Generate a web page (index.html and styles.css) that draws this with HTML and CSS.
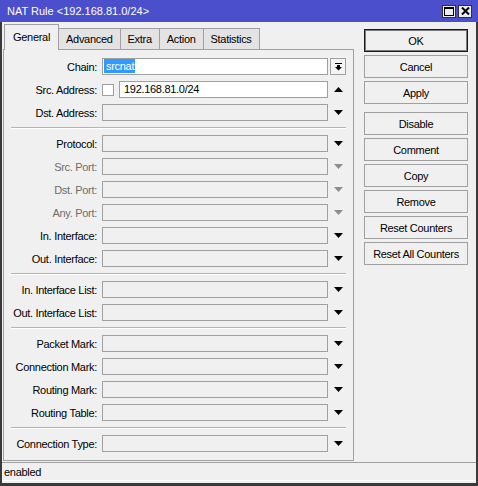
FILE: index.html
```html
<!DOCTYPE html>
<html lang="en">
<head>
    <meta charset="UTF-8">
    <title>NAT Rule &lt;192.168.81.0/24&gt;</title>
    <link rel="stylesheet" href="styles.css">
</head>
<body>

<div class="window">
  <div class="titlebar">
    <span class="title">NAT Rule &lt;192.168.81.0/24&gt;</span>
    <span class="wbtn">
      <svg width="10" height="9" viewBox="0 0 10 9"><rect x="0.5" y="0.5" width="9" height="8" fill="none" stroke="#000"/><rect x="0" y="0" width="10" height="2" fill="#000"/></svg>
    </span>
    <span class="wbtn">
      <svg width="9" height="8" viewBox="0 0 9 8"><path d="M1 0.5 L8 7.5 M8 0.5 L1 7.5" stroke="#000" stroke-width="2"/></svg>
    </span>
  </div>

  <div class="frame">
    <div class="main">
      <div class="left">
        <div class="tabs">
          <div class="tab active">General</div>
          <div class="tab">Advanced</div>
          <div class="tab">Extra</div>
          <div class="tab">Action</div>
          <div class="tab">Statistics</div>
        </div>

        <div class="panel">
          <div class="row">
            <div class="lbl">Chain:</div>
            <div class="field on"><span class="sel">srcnat</span></div>
            <div class="arrow box">
              <svg width="7" height="8" viewBox="0 0 7 8"><rect x="0" y="0" width="7" height="1" fill="#000"/><rect x="2" y="2" width="3" height="2" fill="#000"/><polygon points="0,4 7,4 3.5,7.5" fill="#000"/></svg>
            </div>
          </div>
          <div class="row">
            <div class="lbl">Src. Address:</div>
            <div class="pair">
              <span class="check"></span>
              <div class="field on grow">192.168.81.0/24</div>
            </div>
            <div class="arrow"><svg width="9" height="5" viewBox="0 0 9 5"><polygon points="0,5 9,5 4.5,0" fill="#000"/></svg></div>
          </div>
          <div class="row">
            <div class="lbl">Dst. Address:</div>
            <div class="field"></div>
            <div class="arrow"><svg width="9" height="5" viewBox="0 0 9 5"><polygon points="0,0 9,0 4.5,5" fill="#000"/></svg></div>
          </div>

          <div class="sep"></div>

          <div class="row">
            <div class="lbl">Protocol:</div>
            <div class="field"></div>
            <div class="arrow"><svg width="9" height="5" viewBox="0 0 9 5"><polygon points="0,0 9,0 4.5,5" fill="#000"/></svg></div>
          </div>
          <div class="row off">
            <div class="lbl">Src. Port:</div>
            <div class="field"></div>
            <div class="arrow"><svg width="9" height="5" viewBox="0 0 9 5"><polygon points="0,0 9,0 4.5,5" fill="#8b9088"/></svg></div>
          </div>
          <div class="row off">
            <div class="lbl">Dst. Port:</div>
            <div class="field"></div>
            <div class="arrow"><svg width="9" height="5" viewBox="0 0 9 5"><polygon points="0,0 9,0 4.5,5" fill="#8b9088"/></svg></div>
          </div>
          <div class="row off">
            <div class="lbl">Any. Port:</div>
            <div class="field"></div>
            <div class="arrow"><svg width="9" height="5" viewBox="0 0 9 5"><polygon points="0,0 9,0 4.5,5" fill="#8b9088"/></svg></div>
          </div>
          <div class="row">
            <div class="lbl">In. Interface:</div>
            <div class="field"></div>
            <div class="arrow"><svg width="9" height="5" viewBox="0 0 9 5"><polygon points="0,0 9,0 4.5,5" fill="#000"/></svg></div>
          </div>
          <div class="row">
            <div class="lbl">Out. Interface:</div>
            <div class="field"></div>
            <div class="arrow"><svg width="9" height="5" viewBox="0 0 9 5"><polygon points="0,0 9,0 4.5,5" fill="#000"/></svg></div>
          </div>

          <div class="sep"></div>

          <div class="row">
            <div class="lbl">In. Interface List:</div>
            <div class="field"></div>
            <div class="arrow"><svg width="9" height="5" viewBox="0 0 9 5"><polygon points="0,0 9,0 4.5,5" fill="#000"/></svg></div>
          </div>
          <div class="row">
            <div class="lbl">Out. Interface List:</div>
            <div class="field"></div>
            <div class="arrow"><svg width="9" height="5" viewBox="0 0 9 5"><polygon points="0,0 9,0 4.5,5" fill="#000"/></svg></div>
          </div>

          <div class="sep"></div>

          <div class="row">
            <div class="lbl">Packet Mark:</div>
            <div class="field"></div>
            <div class="arrow"><svg width="9" height="5" viewBox="0 0 9 5"><polygon points="0,0 9,0 4.5,5" fill="#000"/></svg></div>
          </div>
          <div class="row">
            <div class="lbl">Connection Mark:</div>
            <div class="field"></div>
            <div class="arrow"><svg width="9" height="5" viewBox="0 0 9 5"><polygon points="0,0 9,0 4.5,5" fill="#000"/></svg></div>
          </div>
          <div class="row">
            <div class="lbl">Routing Mark:</div>
            <div class="field"></div>
            <div class="arrow"><svg width="9" height="5" viewBox="0 0 9 5"><polygon points="0,0 9,0 4.5,5" fill="#000"/></svg></div>
          </div>
          <div class="row">
            <div class="lbl">Routing Table:</div>
            <div class="field"></div>
            <div class="arrow"><svg width="9" height="5" viewBox="0 0 9 5"><polygon points="0,0 9,0 4.5,5" fill="#000"/></svg></div>
          </div>

          <div class="sep"></div>

          <div class="row">
            <div class="lbl">Connection Type:</div>
            <div class="field"></div>
            <div class="arrow"><svg width="9" height="5" viewBox="0 0 9 5"><polygon points="0,0 9,0 4.5,5" fill="#000"/></svg></div>
          </div>
        </div>
      </div>

      <div class="buttons">
        <div class="btn default">OK</div>
        <div class="btn">Cancel</div>
        <div class="btn">Apply</div>
        <div class="btn spaced">Disable</div>
        <div class="btn">Comment</div>
        <div class="btn">Copy</div>
        <div class="btn">Remove</div>
        <div class="btn">Reset Counters</div>
        <div class="btn">Reset All Counters</div>
      </div>
    </div>

    <div class="status">enabled</div>
  </div>
</div>

</body>
</html>
```

FILE: styles.css
```css
body {
    margin: 0;
    font-family: "Liberation Sans", Arial, sans-serif;
    font-size: 11px;
    letter-spacing: -0.3px;
    color: #000;
}

.window {
    width: 478px;
    height: 486px;
    background: #f0f0f0;
    display: flex;
    flex-direction: column;
}

/* title bar */
.titlebar {
    height: 22px;
    flex: none;
    background: #4b4fcb;
    color: #fff;
    display: flex;
    align-items: center;
    padding: 0 6px 0 7px;
    letter-spacing: 0;
}

.titlebar .title {
    flex: 1;
}

.wbtn {
    width: 14px;
    height: 13px;
    box-sizing: border-box;
    border: 1px solid #303030;
    background: #ececec;
    margin-left: 2px;
    display: flex;
    align-items: center;
    justify-content: center;
}

.frame {
    flex: 1;
    display: flex;
    flex-direction: column;
    border: 2px solid #3a3a3a;
    border-top: 0;
    border-bottom-width: 3px;
    padding-bottom: 2px;
}

.main {
    display: flex;
    padding-top: 2px;
}

.left {
    width: 351px;
    margin-left: 1px;
}

/* tabs */
.tabs {
    display: flex;
    align-items: flex-end;
    height: 25px;
    padding-left: 1px;
}

.tab {
    height: 21px;
    box-sizing: border-box;
    border: 1px solid #a0a0a0;
    border-bottom: 0;
    background: #e3e3e3;
    padding: 0 7px;
    line-height: 21px;
    margin-left: -1px;
}

.tab:first-child {
    margin-left: 0;
}

.tab.active {
    height: 26px;
    margin-bottom: -1px;
    line-height: 24px;
    background: #f0f0f0;
    padding: 0 8px;
    position: relative;
    z-index: 1;
}

/* form panel */
.panel {
    box-sizing: border-box;
    height: 412px;
    border: 1px solid #a0a0a0;
    padding: 8px 7px;
    display: flex;
    flex-direction: column;
    gap: 6px;
}

.row {
    display: flex;
    align-items: center;
    height: 17px;
}

.lbl {
    width: 86px;
    margin-right: 5px;
    display: flex;
    justify-content: flex-end;
    white-space: nowrap;
}

.row.off .lbl {
    color: #6d6d6d;
}

.field {
    width: 226px;
    height: 17px;
    box-sizing: border-box;
    border: 1px solid #a0a0a0;
    background: #f0f0f0;
    padding-left: 4px;
    line-height: 15px;
    white-space: nowrap;
}

.field.on {
    background: #fff;
}

.sel {
    background: #3399ff;
    color: #fff;
    padding: 1px 1px 1px 2px;
    margin-left: -3px;
}

.pair {
    width: 226px;
    display: flex;
    align-items: center;
    gap: 5px;
}

.pair .grow {
    width: auto;
    flex: 1;
}

.check {
    width: 12px;
    height: 12px;
    box-sizing: border-box;
    border: 1px solid #a0a0a0;
    background: #fff;
}

.arrow {
    width: 16px;
    height: 17px;
    margin-left: 2px;
    box-sizing: border-box;
    display: flex;
    align-items: center;
    justify-content: center;
}

.arrow.box {
    border: 1px solid #a0a0a0;
    background: #f4f4f4;
}

.sep {
    height: 2px;
    box-sizing: border-box;
    border-top: 1px solid #b4b4b4;
    border-bottom: 1px solid #fff;
}

/* right side buttons */
.buttons {
    width: 104px;
    margin-left: 10px;
    padding-top: 5px;
    display: flex;
    flex-direction: column;
    gap: 3px;
}

.btn {
    height: 23px;
    box-sizing: border-box;
    border: 1px solid #a0a0a0;
    background: #f0f0f0;
    display: flex;
    align-items: center;
    justify-content: center;
}

.btn.default {
    border-color: #1a1a1a;
    box-shadow: inset 0 0 0 1px #7a7a7a;
}

.btn.spaced {
    margin-top: 5px;
}

/* status line */
.status {
    margin-top: 1px;
    height: 19px;
    box-sizing: border-box;
    border-top: 1px solid #a0a0a0;
    border-bottom: 1px solid #fff;
    padding-left: 2px;
    display: flex;
    align-items: center;
}
```
